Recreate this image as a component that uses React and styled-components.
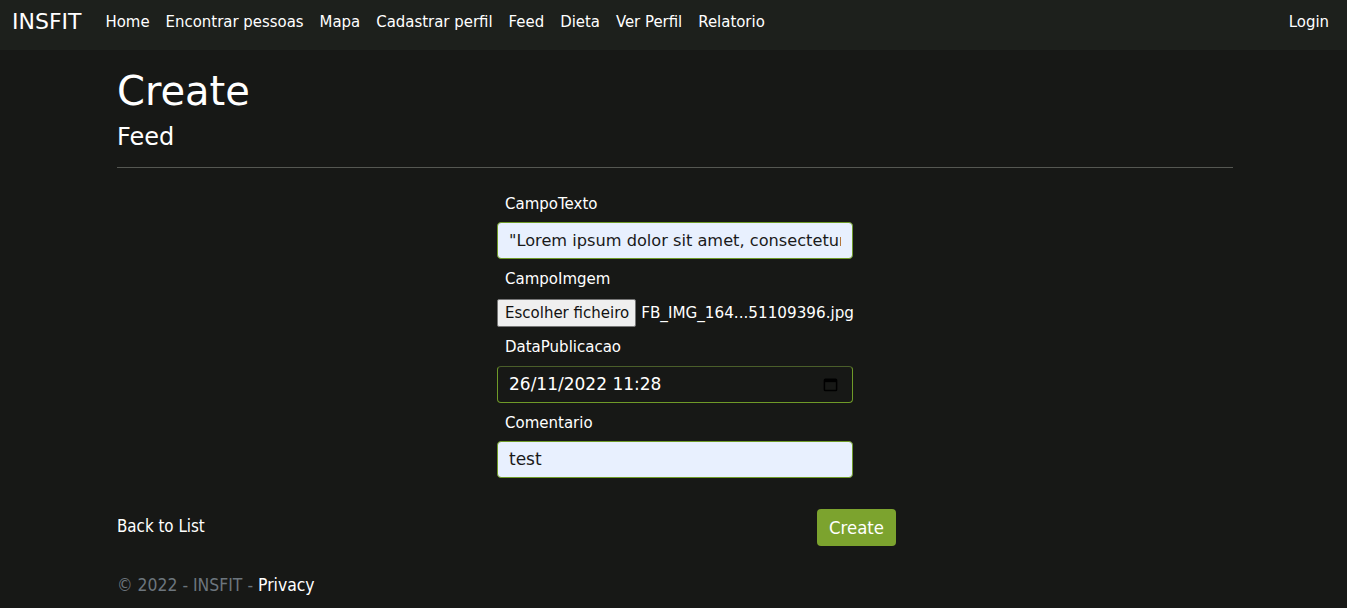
import React from 'react';
import styled, { createGlobalStyle } from 'styled-components';

const Global = createGlobalStyle`
  html, body {
    margin: 0;
    padding: 0;
    background: #171816;
    color: #fff;
    font-family: "DejaVu Sans", Verdana, sans-serif;
  }
  * { box-sizing: border-box; }
`;

const Nav = styled.nav`
  display: flex;
  align-items: center;
  height: 50px;
  padding: 0 18px 8px 12px;
  background: #1d201c;
  font-family: "DejaVu Sans Condensed", "DejaVu Sans", sans-serif;
`;

const Brand = styled.a`
  font-family: "DejaVu Sans", sans-serif;
  font-size: 22px;
  color: #fff;
  text-decoration: none;
  margin-right: 24px;
`;

const NavList = styled.ul`
  display: flex;
  flex: 1;
  gap: 16px;
  margin: 0;
  padding: 0;
  list-style: none;
  li:last-child { margin-left: auto; }
`;

const NavLink = styled.a`
  color: #fff;
  font-size: 16.6px;
  text-decoration: none;
`;

const Container = styled.main`
  width: 1116px;
  margin: 0 0 0 117px;
  padding-top: 18px;
`;

const Title = styled.h1`
  margin: 0;
  font-size: 40px;
  font-weight: 400;
  line-height: 1.15;
`;

const Sub = styled.h4`
  margin: 9px 0 0;
  font-size: 24px;
  font-weight: 400;
  line-height: 1.2;
`;

const Rule = styled.hr`
  margin: 15px 0 0;
  border: 0;
  border-top: 1px solid #555752;
`;

const Form = styled.form`
  width: 356px;
  margin: 27px 0 0 380px;
  display: flex;
  flex-direction: column;
`;

const Group = styled.div`
  display: flex;
  flex-direction: column;
  margin-bottom: 11px;
`;

const Label = styled.label`
  font-size: 15px;
  margin: 0 0 ${p => (p.$gap || 10)}px 8px;
  line-height: 18px;
`;

const Field = styled.input`
  height: 37px;
  padding: 6px 11px;
  font-size: ${p => (p.$small ? '16.2px' : '17px')};
  font-family: "DejaVu Sans", Verdana, sans-serif;
  color: #1a1a1a;
  background: #e8f0fe;
  border: 1px solid #6f9a28;
  border-radius: 4px;
  outline: none;
`;

const DateBox = styled.div`
  height: 37px;
  display: flex;
  align-items: center;
  justify-content: space-between;
  padding: 0 14px 0 11px;
  font-size: 17px;
  color: #fff;
  border: 1px solid #6f9a28;
  border-top-color: #4a5e2a;
  border-radius: 4px;
`;

const FileRow = styled.div`
  display: flex;
  align-items: center;
  gap: 5px;
  font-size: 15.2px;
  white-space: nowrap;
`;

const FileButton = styled.span`
  display: inline-flex;
  align-items: center;
  height: 28px;
  padding: 0 6px 0 7px;
  font-size: 15px;
  color: #111;
  background: #efefef;
  border: 1px solid #767676;
  border-radius: 2px;
`;

const Bottom = styled.div`
  display: grid;
  grid-template-columns: 700px auto;
  align-items: center;
  margin-top: 20px;
`;

const PlainLink = styled.a`
  color: #fff;
  font-size: 16.8px;
  text-decoration: none;
  font-family: "DejaVu Sans Condensed", "DejaVu Sans", sans-serif;
  justify-self: start;
  margin-top: -2px;
`;

const Submit = styled.button`
  justify-self: start;
  height: 37px;
  padding: 0 12px;
  font-size: 18.4px;
  font-family: "DejaVu Sans Condensed", "DejaVu Sans", sans-serif;
  color: #fff;
  background: #7ca32e;
  border: 0;
  border-radius: 4px;
`;

const Footer = styled.footer`
  width: 1116px;
  margin: 29px 0 0 117px;
  font-size: 17.4px;
  color: #6c757d;
  font-family: "DejaVu Sans Condensed", "DejaVu Sans", sans-serif;
  a { color: #fff; text-decoration: none; }
`;

const CalendarIcon = () => (
  <svg width="15" height="15" viewBox="0 0 16 16">
    <rect x="1.5" y="2.5" width="13" height="12" rx="1" fill="none" stroke="#000" strokeWidth="1.6" />
    <rect x="1.5" y="2.5" width="13" height="3" fill="#000" />
  </svg>
);

const links = ['Home', 'Encontrar pessoas', 'Mapa', 'Cadastrar perfil', 'Feed', 'Dieta', 'Ver Perfil', 'Relatorio'];

export default function App() {
  return (
    <>
      <Global />
      <Nav>
        <Brand href="#">INSFIT</Brand>
        <NavList>
          {links.map(l => (
            <li key={l}><NavLink href="#">{l}</NavLink></li>
          ))}
          <li><NavLink href="#">Login</NavLink></li>
        </NavList>
      </Nav>
      <Container>
        <Title>Create</Title>
        <Sub>Feed</Sub>
        <Rule />
        <Form onSubmit={e => e.preventDefault()}>
          <Group>
            <Label $gap={9}>CampoTexto</Label>
            <Field $small readOnly value={'"Lorem ipsum dolor sit amet, consectetur adipiscing elit'} />
          </Group>
          <Group>
            <Label $gap={11}>CampoImgem</Label>
            <FileRow>
              <FileButton>Escolher ficheiro</FileButton>
              <span>FB_IMG_164...51109396.jpg</span>
            </FileRow>
          </Group>
          <Group>
            <Label>DataPublicacao</Label>
            <DateBox>
              <span>26/11/2022 11:28</span>
              <CalendarIcon />
            </DateBox>
          </Group>
          <Group>
            <Label $gap={9}>Comentario</Label>
            <Field readOnly value="test" />
          </Group>
        </Form>
        <Bottom>
          <PlainLink href="#">Back to List</PlainLink>
          <Submit>Create</Submit>
        </Bottom>
      </Container>
      <Footer>
        © 2022 - INSFIT - <a href="#">Privacy</a>
      </Footer>
    </>
  );
}
